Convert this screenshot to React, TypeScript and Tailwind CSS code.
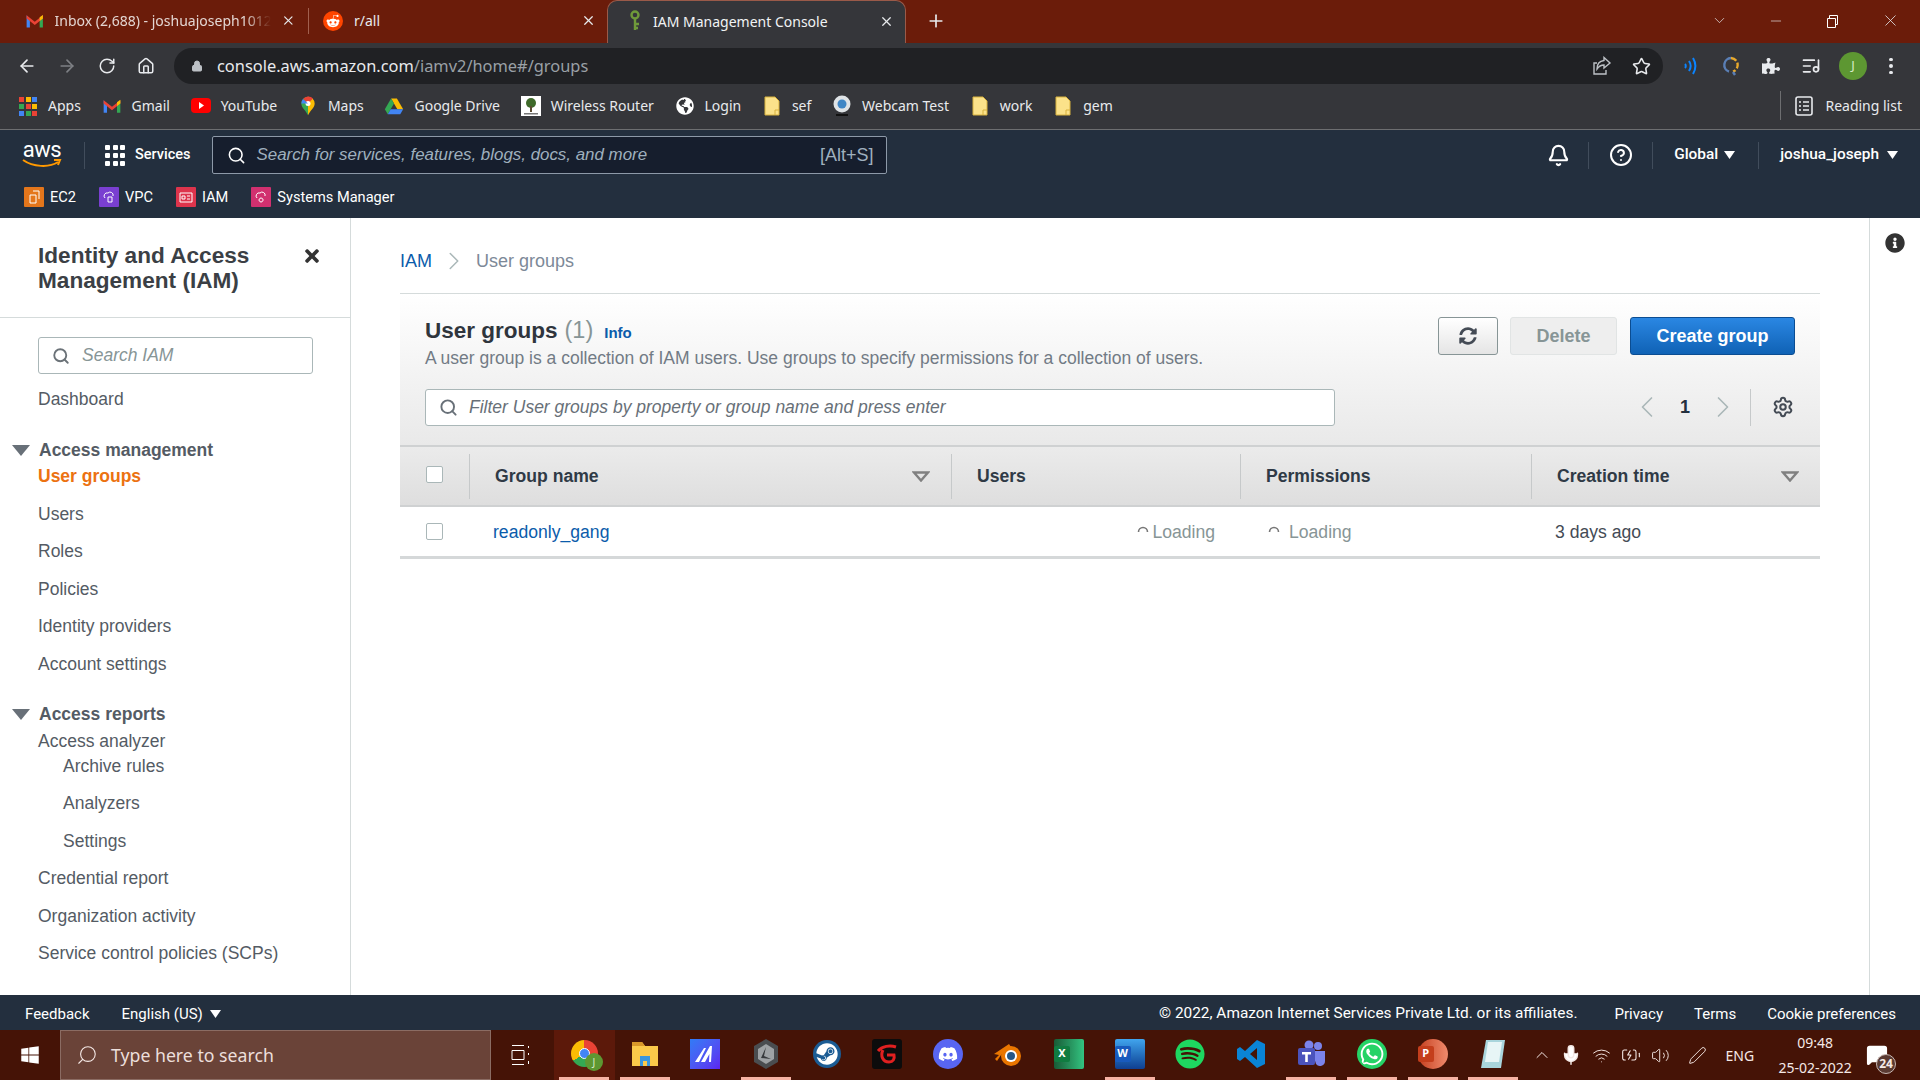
import {
  ArrowLeft,
  ArrowRight,
  RotateCw,
  Home,
  Lock,
  Star,
  ListMusic,
  Bell,
  CircleHelp,
  Search,
  Settings,
  ChevronLeft,
  ChevronRight,
  ChevronDown,
  ChevronUp,
  X,
  Plus,
  Minus,
  Mic,
  Wifi,
  BatteryCharging,
  Volume2,
  Pen,
  MessageSquareText,
} from 'lucide-react';
import { FaWindows, FaRedditAlien, FaDiscord, FaSteam, FaSpotify, FaWhatsapp, FaPuzzlePiece, FaTimes, FaInfoCircle, FaSyncAlt, FaGlobeAmericas } from 'react-icons/fa';
import type { ReactNode } from 'react';

const GmailIcon = ({ size = 20 }: { size?: number }) => (
  <svg width={size} height={size} viewBox="0 0 24 24">
    <path d="M2 5v15h4V10z" fill="#4285f4" />
    <path d="M22 5v15h-4V10z" fill="#34a853" />
    <path d="M2 5l10 8 10-8v4l-10 8L2 9z" fill="#ea4335" />
    <path d="M18 7.5 22 4.5V9l-4 3z" fill="#fbbc04" />
  </svg>
);

const DriveIcon = () => (
  <svg width="20" height="20" viewBox="0 0 24 24">
    <path d="M8.5 3h7L23 16h-7z" fill="#fbbc04" />
    <path d="M8.5 3 1 16l3.5 6L12 9z" fill="#34a853" />
    <path d="M8 16h15l-3.5 6h-15z" fill="#4285f4" />
  </svg>
);

const MapsIcon = () => (
  <svg width="20" height="20" viewBox="0 0 24 24">
    <path d="M12 1a8 8 0 0 0-8 8c0 5 5 8 8 14z" fill="#34a853" />
    <path d="M12 1a8 8 0 0 1 8 8c0 5-5 8-8 14z" fill="#fbbc04" />
    <path d="M6 3.5A8 8 0 0 1 18 3l-6 6z" fill="#ea4335" />
    <circle cx="12" cy="9" r="3" fill="#fff" />
    <path d="M4 9a8 8 0 0 1 2-5.5L12 9z" fill="#4285f4" />
  </svg>
);

const FolderIcon = () => (
  <svg width="16" height="20" viewBox="0 0 16 20">
    <path d="M1 1h10l4 4v14H1z" fill="#fbe28a" stroke="#d8b23e" />
    <path d="M11 19v-5h4" fill="none" stroke="#d8b23e" />
  </svg>
);

const AppsIcon = () => (
  <div className="grid grid-cols-3 gap-[2px] w-[18px] h-[18px]">
    {['#ea4335', '#fbbc04', '#4285f4', '#34a853', '#ea4335', '#fbbc04', '#4285f4', '#34a853', '#ea4335'].map((c, i) => (
      <svg key={i} width="5" height="5" viewBox="0 0 5 5">
        <rect width="5" height="5" fill={c} />
      </svg>
    ))}
  </div>
);

const KeyIcon = () => (
  <svg width="14" height="22" viewBox="0 0 14 22" fill="none" stroke="#6f9a3a" strokeWidth="2.4">
    <circle cx="7" cy="5" r="3.5" />
    <path d="M7 9v11M7 14h4M7 18h3" />
  </svg>
);

const Bookmark = ({ icon, label }: { icon: ReactNode; label: string }) => (
  <div className="flex items-center gap-[10px] mr-[20.7px]">
    <div className="w-5 h-5 flex items-center justify-center shrink-0">{icon}</div>
    <span className="text-[14px] text-[#e8eaed]">{label}</span>
  </div>
);

const ServiceTile = ({ color, path, label }: { color: string; path: string; label: string }) => (
  <div className="flex items-center gap-[6px] mr-[23px]">
    <div className={`w-5 h-5 flex items-center justify-center rounded-[1px] ${color}`}>
      <svg width="14" height="14" viewBox="0 0 14 14" fill="none" stroke="#fff" strokeWidth="1">
        <path d={path} />
      </svg>
    </div>
    <span className="text-[14.6px] text-white">{label}</span>
  </div>
);

const Caret = () => (
  <svg width="11" height="8" viewBox="0 0 11 8">
    <path d="M0 0h11L5.5 8z" fill="#fff" />
  </svg>
);

const SortCaret = () => (
  <svg width="18" height="11" viewBox="0 0 18 11" fill="none" stroke="#808080" strokeWidth="2.4">
    <path d="M2 1.5h14L9 9.5z" />
  </svg>
);

const Spinner = () => (
  <svg width="12" height="12" viewBox="0 0 12 12" fill="none" stroke="#777" strokeWidth="1.6">
    <path d="M1.5 6a4.5 4.5 0 0 1 9 0" />
  </svg>
);

const Checkbox = () => <div className="w-[17px] h-[17px] bg-white border border-[#aab7b8] rounded-[2px]" />;

const NavLink = ({ label, sub, active }: { label: string; sub?: boolean; active?: boolean }) => (
  <div
    className={`h-[37.5px] flex items-center text-[17.5px] ${sub ? 'pl-[63px]' : 'pl-[38px]'} ${
      active ? 'text-[#ec7211] font-bold' : 'text-[#545b64]'
    }`}
  >
    {label}
  </div>
);

const NavHeader = ({ label }: { label: string }) => (
  <div className="flex items-center h-[26px] pl-[12px] gap-[9px] text-[17.5px] font-bold text-[#545b64]">
    <svg width="18" height="11" viewBox="0 0 18 11">
      <path d="M0 0h18L9 11z" fill="#687078" />
    </svg>
    {label}
  </div>
);

const TaskIcon = ({ children, active, lit }: { children: ReactNode; active?: boolean; lit?: boolean }) => (
  <div className={`w-[60.6px] h-[50px] shrink-0 flex flex-col items-center ${active ? 'bg-[#5c190a]' : ''}`}>
    <div className="flex-1 flex items-center justify-center">{children}</div>
    <div className={`w-[50px] h-[3px] ${lit ? 'bg-[#f6b3a4]' : ''}`} />
  </div>
);

const ChromeTab = () => (
  <div className="flex items-center h-[43px] bg-[#6b1c0a] text-[14px] text-[#e8eaed]" style={{ fontFamily: '"Noto Sans", sans-serif' }}>
    <div className="w-[309px] flex items-center pl-[25px] pr-[12px] border-r border-[#a1604f] h-[26px] mb-[2px]">
      <GmailIcon />
      <span className="ml-[10px] w-[222px] overflow-hidden whitespace-nowrap text-[#e3d6d2] [mask-image:linear-gradient(to_right,black_88%,transparent)]">
        Inbox (2,688) - joshuajoseph1012
      </span>
      <X size={15} className="ml-[10px]" />
    </div>
    <div className="w-[298px] flex items-center pl-[14px] pr-[11px] h-[26px] mb-[2px]">
      <div className="w-5 h-5 rounded-full bg-[#ff4500] flex items-center justify-center">
        <FaRedditAlien size={14} color="#fff" />
      </div>
      <span className="ml-[11px] flex-1">r/all</span>
      <X size={15} />
    </div>
    <div className="w-[299px] h-[43px] pb-[2px] flex items-center pl-[20px] pr-[11px] bg-[#35363a] rounded-t-[10px] border-t border-x border-[#9a5a49]">
      <KeyIcon />
      <span className="ml-[11px] flex-1 text-[#f1f3f4]">IAM Management Console</span>
      <X size={15} />
    </div>
    <Plus size={20} className="ml-[20px] mb-[2px]" />
    <div className="flex-1" />
    <ChevronDown size={17} strokeWidth={1} className="mr-[40px] mb-[2px]" />
    <Minus size={16} strokeWidth={1} className="mr-[41px] mb-[2px]" />
    <svg width="14" height="14" viewBox="0 0 14 14" fill="none" stroke="#fff" className="mr-[42px] mb-[2px]">
      <path d="M2.5 4.5h8v9h-8zM4.5 4.5v-3h8v9h-2" />
    </svg>
    <X size={19} strokeWidth={1} className="mr-[20px] mb-[2px]" />
  </div>
);

const Toolbar = () => (
  <div className="flex items-center h-[41px] pt-[5px] bg-[#35363a] text-[#e8eaed]" style={{ fontFamily: '"Noto Sans", sans-serif' }}>
    <ArrowLeft size={20} className="ml-[17px]" />
    <ArrowRight size={20} className="ml-[20px] text-[#7e8085]" />
    <RotateCw size={18} className="ml-[21px]" />
    <Home size={18} className="ml-[21px]" />
    <div className="ml-[19px] w-[1489px] h-[36px] bg-[#202124] rounded-full flex items-center pl-[17px] pr-[12px]">
      <Lock size={12} className="text-[#bdc1c6] fill-[#bdc1c6]" />
      <span className="ml-[14px] text-[16.4px]">
        console.aws.amazon.com<span className="text-[#9aa0a6]">/iamv2/home#/groups</span>
      </span>
      <div className="flex-1" />
      <svg width="20" height="20" viewBox="0 0 20 20" fill="none" stroke="#bdc1c6" strokeWidth="1.4">
        <path d="M12 1.5l6 5.5-6 5V9c-3 0-5 1-7 4 0-5 3-8 7-8.5zM14 14v4H2V7h3" />
      </svg>
      <Star size={19} className="ml-[20px] text-[#e8eaed]" />
    </div>
    <svg width="20" height="20" viewBox="0 0 20 20" fill="none" stroke="#0a84ff" strokeWidth="2" className="ml-[17px]">
      <path d="M5 8c1 1 1 3 0 4M9 5c2 3 2 7 0 10M13 2c3 5 3 11 0 16" />
    </svg>
    <svg width="20" height="22" viewBox="0 0 20 22" fill="none" strokeWidth="2.4" className="ml-[21px]">
      <path d="M10 3a7 7 0 0 0-2 13.6" stroke="#5a7fb5" />
      <path d="M10 3a7 7 0 0 1 2 13.6" stroke="#e8a92c" strokeDasharray="6 2" />
      <path d="M12 17l2 3" stroke="#5a7fb5" />
    </svg>
    <FaPuzzlePiece size={18} className="ml-[21px]" />
    <ListMusic size={20} className="ml-[21px]" />
    <div className="ml-[18px] w-[28px] h-[28px] rounded-full bg-[#5d9732] flex items-center justify-center text-[13px] text-[#d8ecc8]">J</div>
    <div className="ml-[22px] flex flex-col gap-[3px]">
      <div className="w-[3.5px] h-[3.5px] rounded-full bg-[#e8eaed]" />
      <div className="w-[3.5px] h-[3.5px] rounded-full bg-[#e8eaed]" />
      <div className="w-[3.5px] h-[3.5px] rounded-full bg-[#e8eaed]" />
    </div>
  </div>
);

const Bookmarks = () => (
  <div className="flex items-center h-[46px] pb-[2px] pl-[18px] bg-[#35363a] border-b border-[#6d6e70]" style={{ fontFamily: '"Noto Sans", sans-serif' }}>
    <Bookmark icon={<AppsIcon />} label="Apps" />
    <Bookmark icon={<GmailIcon />} label="Gmail" />
    <Bookmark
      icon={
        <svg width="20" height="15" viewBox="0 0 20 15">
          <rect width="20" height="15" rx="4" fill="#f00" />
          <path d="M8 4l5 3.5L8 11z" fill="#fff" />
        </svg>
      }
      label="YouTube"
    />
    <Bookmark icon={<MapsIcon />} label="Maps" />
    <Bookmark icon={<DriveIcon />} label="Google Drive" />
    <Bookmark
      icon={
        <svg width="20" height="20" viewBox="0 0 20 20">
          <rect width="20" height="20" fill="#fff" />
          <circle cx="10" cy="7" r="5" fill="#3f6a2a" />
          <rect x="9" y="10" width="2" height="6" fill="#5a4a30" />
          <rect x="3" y="17" width="14" height="1.5" fill="#777" />
        </svg>
      }
      label="Wireless Router"
    />
    <Bookmark icon={<FaGlobeAmericas size={18} className="text-white" />} label="Login" />
    <Bookmark icon={<FolderIcon />} label="sef" />
    <Bookmark
      icon={
        <svg width="20" height="22" viewBox="0 0 20 22">
          <circle cx="10" cy="9" r="8.5" fill="#dfe3e6" />
          <circle cx="10" cy="9" r="4.5" fill="#3f86c5" />
          <rect x="4" y="19" width="12" height="2" fill="#111" />
        </svg>
      }
      label="Webcam Test"
    />
    <Bookmark icon={<FolderIcon />} label="work" />
    <Bookmark icon={<FolderIcon />} label="gem" />
    <div className="flex-1" />
    <div className="h-[29px] border-l border-[#6d6e70] flex items-center pl-[14px] pr-[18px] gap-[12px]">
      <svg width="18" height="20" viewBox="0 0 18 20" fill="none" stroke="#e8eaed" strokeWidth="1.6">
        <rect x="1" y="1" width="16" height="18" rx="2" />
        <path d="M4 6h2M8 6h6M4 10h2M8 10h6M4 14h2M8 14h6" />
      </svg>
      <span className="text-[14px] text-[#e8eaed]">Reading list</span>
    </div>
  </div>
);

const AwsNav = () => (
  <div className="h-[88px] bg-[#232f3e] flex flex-col" style={{ fontFamily: 'Roboto, sans-serif' }}>
    <div className="flex items-center h-[50px]">
      <div className="ml-[22px] w-[40px] flex flex-col items-center">
        <span className="text-[22px] leading-[18px] text-white tracking-[-0.5px]">aws</span>
        <svg width="40" height="10" viewBox="0 0 40 10" fill="none" stroke="#f90" strokeWidth="2">
          <path d="M1 1c10 7 26 8 35 2M32 1l6 0-2 5" />
        </svg>
      </div>
      <div className="ml-[22px] h-[27px] border-l border-[#414d5c]" />
      <div className="ml-[20px] grid grid-cols-3 gap-[3px] w-[20px]">
        {Array.from({ length: 9 }).map((_, i) => (
          <div key={i} className="w-[5px] h-[5px] bg-white rounded-[1px]" />
        ))}
      </div>
      <span className="ml-[10px] text-[14.5px] font-medium text-white">Services</span>
      <div className="ml-[21px] w-[675px] h-[38px] bg-[#161e2d] border border-[#8d99a8] rounded-[2px] flex items-center px-[14px]">
        <Search size={19} className="text-white" />
        <span className="ml-[11px] text-[16.9px] italic text-[#9fb0be] flex-1" style={{ fontFamily: '"Liberation Sans", sans-serif' }}>
          Search for services, features, blogs, docs, and more
        </span>
        <span className="text-[18px] text-[#9fb0be] mr-[-2px]" style={{ fontFamily: '"Liberation Sans", sans-serif' }}>[Alt+S]</span>
      </div>
      <div className="flex-1" />
      <Bell size={23} strokeWidth={2.2} className="text-white" />
      <div className="ml-[18px] h-[27px] border-l border-[#414d5c]" />
      <CircleHelp size={24} className="ml-[20px] text-white" />
      <div className="ml-[19px] h-[27px] border-l border-[#414d5c]" />
      <span className="ml-[21px] text-[15.4px] font-medium text-white">Global</span>
      <div className="ml-[6px]"><Caret /></div>
      <div className="ml-[23px] h-[27px] border-l border-[#414d5c]" />
      <span className="ml-[21px] text-[15.4px] font-medium text-white">joshua_joseph</span>
      <div className="ml-[8px] mr-[22px]"><Caret /></div>
    </div>
    <div className="flex items-center h-[35px] pl-[24px]">
      <ServiceTile color="bg-[#e4761b]" path="M3 5h6v8H3zM6 1h6v8" label="EC2" />
      <ServiceTile color="bg-[#7a3fd1]" path="M3 8a3 3 0 0 1 3-5 3 3 0 0 1 5 3M6 7h4v5H6z" label="VPC" />
      <ServiceTile color="bg-[#dd344c]" path="M1 3h12v9H1zM3 6h3v3H3zM8 6h3M8 9h3" label="IAM" />
      <ServiceTile color="bg-[#d1306f]" path="M3 8a3 3 0 0 1 3-5 3 3 0 0 1 5 3M7 8a2 2 0 1 0 .1 0" label="Systems Manager" />
    </div>
  </div>
);

const Sidebar = () => (
  <div className="w-[351px] shrink-0 border-r border-[#d5dbdb] h-full flex flex-col">
    <div className="h-[100px] border-b border-[#d5dbdb] pl-[38px] pr-[28px] pt-[25px] flex items-start justify-between">
      <div className="text-[22.6px] leading-[25px] font-bold text-[#3b3f45]">
        Identity and Access
        <br />
        Management (IAM)
      </div>
      <FaTimes size={20} className="mt-[3px] text-[#333]" />
    </div>
    <div className="mt-[19px] ml-[38px] w-[275px] h-[37px] bg-white border border-[#aab7b8] rounded-[3px] flex items-center pl-[13px] shrink-0">
      <Search size={18} strokeWidth={2.5} className="text-[#6b7278]" />
      <span className="ml-[12px] text-[17.5px] italic text-[#879596]">Search IAM</span>
    </div>
    <div className="mt-[6px]">
      <NavLink label="Dashboard" />
    </div>
    <div className="mt-[20px]">
      <NavHeader label="Access management" />
    </div>
    <div className="mt-[-6px]">
      <NavLink label="User groups" active />
    </div>
    <NavLink label="Users" />
    <NavLink label="Roles" />
    <NavLink label="Policies" />
    <NavLink label="Identity providers" />
    <NavLink label="Account settings" />
    <div className="mt-[19px] mb-[-5px]">
      <NavHeader label="Access reports" />
    </div>
    <NavLink label="Access analyzer" />
    <div className="mt-[-13px]">
      <NavLink label="Archive rules" sub />
    </div>
    <NavLink label="Analyzers" sub />
    <NavLink label="Settings" sub />
    <NavLink label="Credential report" />
    <NavLink label="Organization activity" />
    <NavLink label="Service control policies (SCPs)" />
  </div>
);

const TableHead = ({ label, sort }: { label: string; sort?: boolean }) => (
  <div className="h-[45px] border-l border-[#c6c9ca] flex items-center justify-between pl-[25px] pr-[21px] text-[17.6px] font-bold text-[#2f3a46]">
    {label}
    {sort && <SortCaret />}
  </div>
);

const Groups = () => (
  <div className="flex-1 min-w-0 px-[49px]">
    <div className="h-[76px] pt-[11px] flex items-center text-[18px] border-b border-[#d5dbdb]">
      <span className="text-[#0b5cab]">IAM</span>
      <ChevronRight size={30} strokeWidth={1.2} className="ml-[7px] text-[#aab7b8]" />
      <span className="ml-[7px] text-[#7d8998]">User groups</span>
    </div>
    <div className="h-[151px] bg-gradient-to-b from-white to-[#e9e9e9] pl-[25px] pr-[26px] pt-[23px]">
      <div className="flex items-start justify-between">
        <div>
          <div className="flex items-baseline">
            <span className="text-[22.5px] leading-[26px] font-bold text-[#2f353d]">User groups</span>
            <span className="ml-[7px] text-[23.5px] leading-[26px] text-[#879596]">(1)</span>
            <span className="ml-[11px] text-[15px] font-bold text-[#0b5cab]">Info</span>
          </div>
          <div className="mt-[2px] text-[17.5px] leading-[22px] text-[#727b85]">
            A user group is a collection of IAM users. Use groups to specify permissions for a collection of users.
          </div>
        </div>
        <div className="flex items-center">
          <div className="w-[60px] h-[38px] bg-gradient-to-b from-white to-[#e5e5e5] border border-[#879596] rounded-[3px] flex items-center justify-center">
            <FaSyncAlt size={18} className="text-[#444b55]" />
          </div>
          <div className="ml-[12px] w-[107px] h-[38px] bg-[#eeeeee] border border-[#e1e4e4] rounded-[3px] flex items-center justify-center text-[18px] font-bold text-[#879596]">
            Delete
          </div>
          <div className="ml-[13px] mr-[-1px] w-[165px] h-[38px] bg-gradient-to-b from-[#2a87e3] to-[#0f62b5] border border-[#0b4d92] rounded-[3px] flex items-center justify-center text-[18px] font-bold text-white">
            Create group
          </div>
        </div>
      </div>
      <div className="mt-[20px] flex items-center">
        <div className="w-[910px] h-[37px] bg-white border border-[#aab7b8] rounded-[3px] flex items-center pl-[13px]">
          <Search size={19} strokeWidth={2.4} className="text-[#687078]" />
          <span className="ml-[11px] text-[17.5px] italic text-[#687078]">Filter User groups by property or group name and press enter</span>
        </div>
        <div className="flex-1" />
        <ChevronLeft size={36} strokeWidth={1.1} className="text-[#aab7b8]" />
        <span className="ml-[15px] text-[18px] font-bold text-[#232f3e]">1</span>
        <ChevronRight size={36} strokeWidth={1.1} className="ml-[15px] text-[#aab7b8]" />
        <div className="ml-[9px] h-[37px] border-l border-[#c6c9ca]" />
        <Settings size={22} strokeWidth={2.2} className="ml-[21px] text-[#444b55]" />
      </div>
    </div>
    <div className="grid grid-cols-[69px_482px_289px_291px_289px] items-center h-[62px] bg-gradient-to-b from-[#ebebeb] to-[#dedede] border-y-2 border-y-[#cfd1d2]">
      <div className="pl-[26px] mt-[-3px]"><Checkbox /></div>
      <TableHead label="Group name" sort />
      <TableHead label="Users" />
      <TableHead label="Permissions" />
      <TableHead label="Creation time" sort />
    </div>
    <div className="grid grid-cols-[69px_482px_289px_291px_289px] items-center h-[52px] pt-[1px] border-b-[3px] border-b-[#d5d8d9] text-[17.6px]">
      <div className="pl-[26px] mt-[-2px]"><Checkbox /></div>
      <div className="pl-[24px] text-[#0b5cab]">readonly_gang</div>
      <div className="flex items-center justify-end pr-[25px] gap-[3px] text-[#879596]">
        <Spinner />
        Loading
      </div>
      <div className="flex items-center pl-[28px] gap-[9px] text-[#879596]">
        <Spinner />
        Loading
      </div>
      <div className="pl-[24px] text-[#444b55]">3 days ago</div>
    </div>
  </div>
);

const Footer = () => (
  <div className="h-[35px] pt-[3px] bg-[#232f3e] flex items-center pl-[25px] pr-[24px] text-[15px] text-white" style={{ fontFamily: 'Roboto, sans-serif' }}>
    <span>Feedback</span>
    <span className="ml-[32px]">English (US)</span>
    <div className="ml-[7px]"><Caret /></div>
    <div className="flex-1" />
    <span className="text-[15.4px]">© 2022, Amazon Internet Services Private Ltd. or its affiliates.</span>
    <span className="ml-[37px]">Privacy</span>
    <span className="ml-[31px]">Terms</span>
    <span className="ml-[31px]">Cookie preferences</span>
  </div>
);

const Taskbar = () => (
  <div className="h-[50px] bg-[#451306] flex items-center text-[#f5e9e6]" style={{ fontFamily: '"Noto Sans", sans-serif' }}>
    <div className="w-[60px] flex justify-center">
      <FaWindows size={20} color="#fff" />
    </div>
    <div className="w-[431px] h-[50px] bg-[#6a4338] border border-[#8b6c63] flex items-center pl-[15px]">
      <Search size={22} strokeWidth={1.2} className="-scale-x-100" />
      <span className="ml-[13px] text-[17.7px] text-[#ecdfdb]">Type here to search</span>
    </div>
    <div className="w-[63px] pr-[4px] flex justify-center">
      <svg width="20" height="20" viewBox="0 0 20 20" fill="none" stroke="#fff">
        <path d="M1 .5h12M1 19.5h12M1 5.5h12v9H1zM17.5 1v2M17.5 8v2M17.5 16v3" />
      </svg>
    </div>
    <TaskIcon active lit>
      <div className="relative">
        <div className="w-[27px] h-[27px] rounded-full bg-[conic-gradient(#ea4335_0_33%,#34a853_33%_66%,#fbbc04_66%_100%)] flex items-center justify-center">
          <div className="w-[11px] h-[11px] rounded-full bg-[#4285f4] border border-white" />
        </div>
        <div className="absolute right-[-5px] bottom-[-4px] w-[18px] h-[18px] rounded-full bg-[#5d9732] text-[10px] text-[#d8ecc8] flex items-center justify-center">J</div>
      </div>
    </TaskIcon>
    <TaskIcon lit>
      <svg width="28" height="26" viewBox="0 0 28 26">
        <path d="M1 1h10l3 4h13v20H1z" fill="#fbc94a" />
        <path d="M1 1h10l3 4H1z" fill="#d9982a" />
        <path d="M9 15h10v10H9z" fill="#3a96dd" />
        <rect x="12" y="20" width="4" height="5" fill="#fbc94a" />
      </svg>
    </TaskIcon>
    <TaskIcon>
      <div className="w-[30px] h-[30px] bg-gradient-to-br from-[#2f7bf6] to-[#5a22f0] flex items-center justify-center">
        <svg width="20" height="16" viewBox="0 0 20 16" fill="#fff">
          <path d="M0 16 9 2h2L4 16zM6 16 15 0h2l-1 16h-2l.4-8-4.4 8z" />
        </svg>
      </div>
    </TaskIcon>
    <TaskIcon lit>
      <svg width="26" height="30" viewBox="0 0 26 30">
        <path d="M13 0l12 7v16l-12 7L1 23V7z" fill="#4a4d50" />
        <path d="M13 5l8 5v10l-8 5-8-5V10z" fill="#9ea2a5" />
        <path d="M13 8 8 19l10 1-7-3z" fill="#36393c" />
      </svg>
    </TaskIcon>
    <TaskIcon>
      <div className="w-[28px] h-[28px] rounded-full bg-[#1b5c94] flex items-center justify-center">
        <FaSteam size={22} color="#fff" />
      </div>
    </TaskIcon>
    <TaskIcon>
      <div className="w-[30px] h-[30px] bg-[#0c0c0c] rounded-[3px] flex items-center justify-center">
        <svg width="22" height="22" viewBox="0 0 22 22" fill="none" stroke="#e02020" strokeWidth="3">
          <path d="M2 8c4-5 12-6 18-4M7 7c-3 6 0 12 6 12 4 0 6-3 5-7h-7" />
        </svg>
      </div>
    </TaskIcon>
    <TaskIcon>
      <div className="w-[30px] h-[30px] rounded-full bg-[#5865f2] flex items-center justify-center">
        <FaDiscord size={20} color="#fff" />
      </div>
    </TaskIcon>
    <TaskIcon>
      <svg width="30" height="26" viewBox="0 0 30 26">
        <circle cx="18" cy="15" r="10" fill="#ea7600" />
        <circle cx="18" cy="15" r="6" fill="#fff" />
        <circle cx="18" cy="15" r="4" fill="#265787" />
        <path d="M1 13 16 3l2 3L8 14l-4 6-2-2 4-4z" fill="#ea7600" />
      </svg>
    </TaskIcon>
    <TaskIcon>
      <div className="relative w-[30px] h-[30px] bg-gradient-to-r from-[#185c37] to-[#33c481] rounded-[2px]">
        <div className="absolute left-0 top-[7px] w-[16px] h-[16px] bg-[#107c41] rounded-[2px] flex items-center justify-center text-white text-[11px] font-bold">X</div>
      </div>
    </TaskIcon>
    <TaskIcon lit>
      <div className="relative w-[30px] h-[30px] bg-gradient-to-b from-[#41a5ee] to-[#103f91] rounded-[2px]">
        <div className="absolute left-0 top-[7px] w-[16px] h-[16px] bg-[#185abd] rounded-[2px] flex items-center justify-center text-white text-[11px] font-bold">W</div>
      </div>
    </TaskIcon>
    <TaskIcon>
      <FaSpotify size={30} color="#1ed760" />
    </TaskIcon>
    <TaskIcon>
      <svg width="30" height="30" viewBox="0 0 30 30" fill="#0a84d6">
        <path d="M21 1l8 4v20l-8 4-12-11-5 4-3-2v-10l3-2 5 4zM21 9l-7 6 7 6z" />
      </svg>
    </TaskIcon>
    <TaskIcon lit>
      <svg width="30" height="28" viewBox="0 0 30 28">
        <circle cx="22" cy="6" r="4" fill="#7b83eb" />
        <circle cx="13" cy="5" r="4.5" fill="#7b83eb" />
        <path d="M16 11h13v10a5 5 0 0 1-9 3z" fill="#7b83eb" />
        <rect x="2" y="8" width="17" height="17" rx="2" fill="#4b53bc" />
        <path d="M6 12h9v2.4h-3.2V22H9.2v-7.6H6z" fill="#fff" />
      </svg>
    </TaskIcon>
    <TaskIcon lit>
      <FaWhatsapp size={30} color="#fff" className="bg-[#25d366] rounded-full p-[2px]" />
    </TaskIcon>
    <TaskIcon lit>
      <div className="relative w-[30px] h-[30px] rounded-full bg-gradient-to-r from-[#c43e1c] to-[#f08a6c]">
        <div className="absolute left-0 top-[7px] w-[16px] h-[16px] bg-[#c43e1c] rounded-[2px] flex items-center justify-center text-white text-[11px] font-bold">P</div>
      </div>
    </TaskIcon>
    <TaskIcon lit>
      <svg width="26" height="30" viewBox="0 0 26 30">
        <path d="M6 1h19l-4 28H1z" fill="#a9d5dc" />
        <path d="M8 3h14l-3 20H5z" fill="#e7f5f6" />
      </svg>
    </TaskIcon>
    <ChevronUp size={20} strokeWidth={1.2} className="ml-[8px]" />
    <Mic size={22} strokeWidth={1.6} className="ml-[8px] fill-white" />
    <Wifi size={19} strokeWidth={1.2} className="ml-[10px]" />
    <BatteryCharging size={20} strokeWidth={1.3} className="ml-[10px]" />
    <Volume2 size={19} strokeWidth={1.2} className="ml-[10px]" />
    <Pen size={19} strokeWidth={1.2} className="ml-[18px]" />
    <span className="ml-[19px] text-[14px]">ENG</span>
    <div className="ml-[23px] w-[76px] flex flex-col items-center text-[14px] leading-[25px]">
      <span>09:48</span>
      <span>25-02-2022</span>
    </div>
    <div className="relative ml-[13px]">
      <MessageSquareText size={22} className="fill-white text-white" />
      <div className="absolute right-[-8px] bottom-[-8px] w-[20px] h-[20px] rounded-full bg-[#5a3a32] border border-[#c9b9b4] text-[12px] font-bold flex items-center justify-center">24</div>
    </div>
  </div>
);

const App = () => {
  return (
    <div className="w-[1920px] h-[1080px] overflow-hidden flex flex-col bg-white" style={{ fontFamily: '"Liberation Sans", Arial, sans-serif' }}>
      <ChromeTab />
      <Toolbar />
      <Bookmarks />
      <AwsNav />
      <div className="flex-1 min-h-0 flex">
        <Sidebar />
        <Groups />
        <div className="w-[51px] shrink-0 border-l border-[#d5dbdb] flex justify-center pt-[15px]">
          <FaInfoCircle size={20} className="text-[#333]" />
        </div>
      </div>
      <Footer />
      <Taskbar />
    </div>
  );
};

export default App;
